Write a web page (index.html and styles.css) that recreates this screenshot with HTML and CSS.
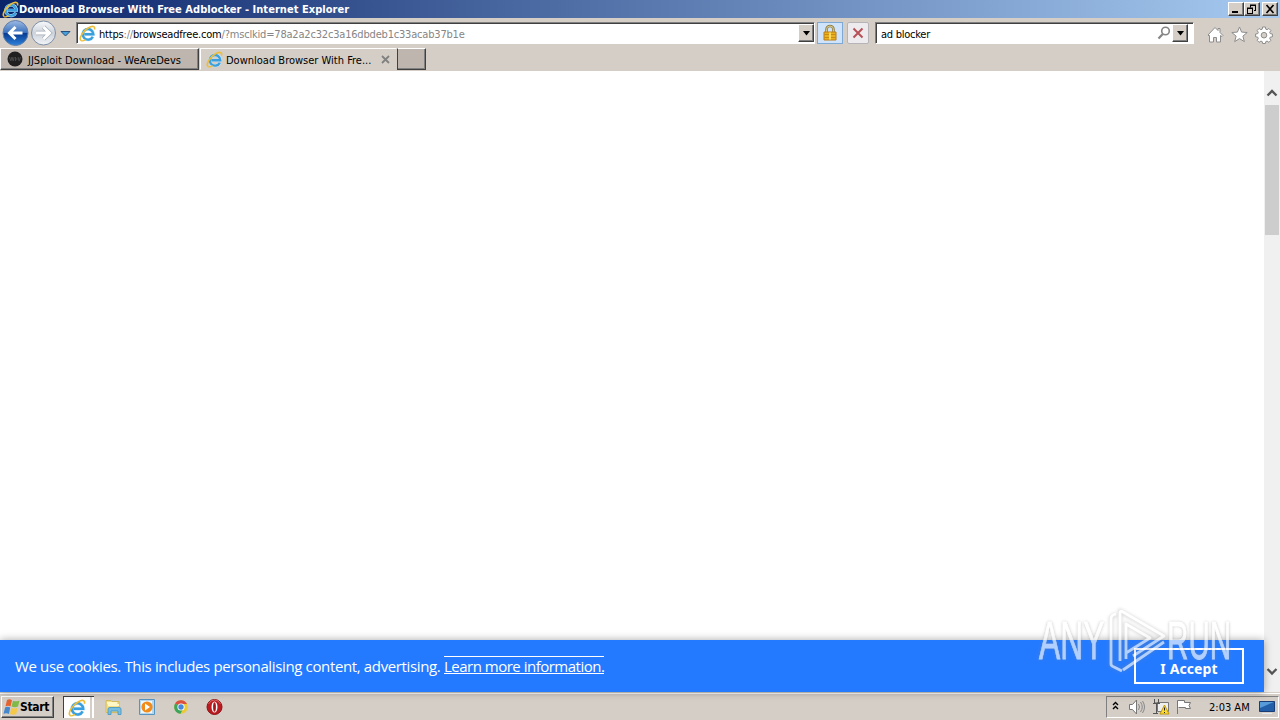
FILE: index.html
```
<!doctype html>
<html lang="en">
<head>
  <meta charset="UTF-8">
  <meta name="viewport" content="width=device-width, initial-scale=1">
  <title>Download Browser With Free Adblocker</title>
  <link rel="stylesheet" href="styles.css">
</head>
<body>
<svg class="defs" width="0" height="0">
  <defs>
    <linearGradient id="blueOrb" x1="0" y1="0" x2="0" y2="1">
      <stop offset="0" stop-color="#9dbbe4"/>
      <stop offset=".48" stop-color="#3c72bd"/>
      <stop offset=".5" stop-color="#08388f"/>
      <stop offset="1" stop-color="#2b83dc"/>
    </linearGradient>
    <linearGradient id="greyOrb" x1="0" y1="0" x2="0" y2="1">
      <stop offset="0" stop-color="#f8fafc"/>
      <stop offset=".5" stop-color="#cdd3db"/>
      <stop offset="1" stop-color="#f2f5f8"/>
    </linearGradient>
    <symbol id="ie" viewBox="0 0 16 16">
      <path d="M13 11A5 5 0 1 1 13.500 8.700H5" fill="none" stroke="#c5e8fb" stroke-width="3"/>
      <path d="M13 11A5 5 0 1 1 13.500 8.700H5" fill="none" stroke="#3a9fdc" stroke-width="2.200"/>
      <path d="M1.900 14.600C-.4 12.600 3.600 5.600 9 2.600c3.400-2 6.600-1.900 5.500 1.700" fill="none" stroke="#eebd37" stroke-width="1.500"/>
      <path d="M1.900 14.600c1 .8 2.800.1 4.300-.9" fill="none" stroke="#eebd37" stroke-width="1.300"/>
    </symbol>
  </defs>
</svg>

<header class="titlebar">
  <svg class="ie-icon" width="17" height="17"><use href="#ie"/></svg>
  <span class="title">Download Browser With Free Adblocker - Internet Explorer</span>
  <div class="window-buttons">
    <button class="win-btn"><svg width="12" height="10"><path d="M2 7h6v2H2z"/></svg></button>
    <button class="win-btn"><svg width="12" height="10"><path d="M4 1h6M4.500 1v2.500M9.500 1v5.500M10 6.500H8M1 4h6M1.500 4v5.500M6.500 4v5.500M1 9.500h6M4 1.500h6M1 4.500h6" fill="none" stroke="#000"/></svg></button>
    <button class="win-btn close"><svg width="12" height="10"><path d="M2.500 1l7 8M9.500 1l-7 8" stroke="#000" stroke-width="1.700"/></svg></button>
  </div>
</header>

<nav class="navbar">
  <svg class="orbs" width="74" height="28">
    <circle cx="15.500" cy="15" r="12.500" fill="url(#blueOrb)" stroke="#637da7"/>
    <path d="M15.500 9l-6 6 6 6M10 15h12.500" fill="none" stroke="#fff" stroke-width="3"/>
    <circle cx="43.500" cy="15" r="12" fill="url(#greyOrb)" stroke="#7e8fa6"/>
    <path d="M43.500 9l6 6-6 6M49 15H36" fill="none" stroke="#a4adb7" stroke-width="4.400"/>
    <path d="M43.500 9l6 6-6 6M49 15H36" fill="none" stroke="#fff" stroke-width="3"/>
    <path d="M61 13.500h9L65.500 18z" fill="#479fd9" stroke="#24507f"/>
  </svg>
  <div class="field address">
    <svg class="ie-icon" width="17" height="17"><use href="#ie"/></svg>
    <span class="url">https<i>://</i>browseadfree.com<i>/?msclkid=78a2a2c32c3a16dbdeb1c33acab37b1e</i></span>
    <span class="drop"><svg width="9" height="5"><path d="M1 0h7L4.500 4.500z"/></svg></span>
  </div>
  <button class="tool lock">
    <svg width="16" height="18">
      <path d="M4.500 9V5.500a3.500 3.500 0 0 1 7 0V9" fill="none" stroke="#8f7e43" stroke-width="2.600"/>
      <path d="M4.500 9V5.500a3.500 3.500 0 0 1 7 0V9" fill="none" stroke="#d8cc91"/>
      <path d="M2 8h12v8H2z" fill="#e8b11d" stroke="#bc7c16"/>
      <path d="M2 10.500h12M2 13.500h12" stroke="#c98b13"/>
      <path d="M8 8.500v7" stroke="#f9db64" stroke-width="2"/>
    </svg>
  </button>
  <button class="tool stop">
    <svg width="14" height="14"><path d="M2.500 2.500l9 9M11.500 2.500l-9 9" stroke="#b85058" stroke-width="2"/></svg>
  </button>
  <div class="field search">
    <span class="query">ad blocker</span>
    <svg class="lens" width="14" height="14"><circle cx="8.500" cy="5" r="3.800" fill="none" stroke="#858585" stroke-width="1.600"/><path d="M5.800 8L1.500 12.500" stroke="#858585" stroke-width="2.200"/></svg>
    <span class="drop"><svg width="9" height="5"><path d="M1 0h7L4.500 4.500z"/></svg></span>
  </div>
  <svg class="commands" width="70" height="20">
    <g fill="#fff" stroke="#8d8d8d">
      <path d="M2 10l7-7.500 3 3V3.500h2V7.500l3 3-1 1-1.500-1V17h-4v-4.500h-3V17h-4v-6.500L3 11z"/>
      <path d="M33.500 2l2.100 5.100 5.600.4-4.300 3.600 1.400 5.500-4.800-3-4.800 3 1.400-5.500-4.300-3.600 5.600-.4z"/>
      <path d="M56.600 2h2.800l.4 2.200 1.300.5 1.800-1.200 2 2-1.200 1.800.5 1.300 2.200.4v2.800l-2.200.4-.5 1.300 1.200 1.800-2 2-1.800-1.200-1.300.5-.4 1.900h-2.800l-.4-1.900-1.300-.5-1.800 1.200-2-2 1.200-1.800-.5-1.300-2.200-.4V9l2.200-.4.5-1.300-1.200-1.800 2-2 1.800 1.200 1.300-.5z"/>
      <circle cx="58" cy="10.200" r="2.800" fill="#d5cec6"/>
    </g>
  </svg>
</nav>

<div class="tabs">
  <div class="tab">
    <svg width="16" height="16"><circle cx="8" cy="8" r="7.500" fill="#202020"/><path d="M2.500 6l1.300 4 1.200-4 1.200 4 1-4M8.500 6v4M8.500 8h2M11 6l1.200 4 1.300-4" fill="none" stroke="#484848"/></svg>
    <span class="label-first">JJSploit Download - WeAreDevs</span>
  </div>
  <div class="tab active">
    <svg width="17" height="17"><use href="#ie"/></svg>
    <span class="label-active">Download Browser With Fre...</span>
    <svg class="tab-close" width="9" height="9"><path d="M1 1l7 7M8 1L1 8" stroke="#818181" stroke-width="1.800"/></svg>
  </div>
  <div class="tab new-tab"></div>
</div>

<main class="viewport">
  <div class="page">
    <div class="cookie-bar">
      <p class="cookie-text">We use cookies. This includes personalising content, advertising. <a class="more">Learn more information.</a></p>
      <button class="accept">I Accept</button>
    </div>
    <div class="watermark">
      <span class="mark-any">ANY</span>
      <svg class="mark-logo" width="60" height="68" fill="none" stroke-linejoin="round">
        <path class="mark-shade" d="M10 4L5 8v47l9 5M14 51V1l44 25-31 20M58 32L16 60M20 49V14l24 14-24 15"/>
        <path d="M10 4Q5 5 5 9v45q0 2 3 3l8 4M14 51V3q0-3 3-1l41 24-31 20M58 32L17 60M20 49V14l24 14-24 15" stroke="#fff" stroke-width="2.800"/>
      </svg>
      <span class="mark-run">RUN</span>
    </div>
  </div>
  <div class="scrollbar">
    <svg width="16" height="12"><path d="M3.500 8.500L8 4l4.500 4.500" fill="none" stroke="#555" stroke-width="2.300"/></svg>
    <div class="thumb"></div>
    <svg class="down" width="16" height="12"><path d="M3.500 4L8 8.500 12.500 4" fill="none" stroke="#555" stroke-width="2.300"/></svg>
  </div>
</main>

<footer class="taskbar">
  <button class="start">
    <svg width="17" height="17">
      <path d="M4 1c2-1 3.500-.8 5 .3L7.500 7.500C6 6.500 4.500 6.500 2.500 7.200z" fill="#e46431"/>
      <path d="M10 1.700c2 .9 4 .9 6.500-.2L15 7.500c-2 1-4.500.9-6.500 0z" fill="#80b948"/>
      <path d="M2.200 8.200C4 7.500 5.500 7.500 7.200 8.500L6 15c-1.800-1-3.500-1-5.500-.3z" fill="#4688cc"/>
      <path d="M8.200 8.700c2 .9 4.100.9 6.500 0L13.200 15c-2 1-4.500.8-6.200-.1z" fill="#f6c847"/>
    </svg>
    <span>Start</span>
  </button>
  <div class="quick">
    <div class="task-ie"><svg width="18" height="18"><use href="#ie"/></svg></div>
    <svg width="18" height="18">
      <path d="M2 2.500h5l1 1h7v11H2z" fill="#f4df85" stroke="#d4ba60"/>
      <path d="M3 5h10M4 7h11" stroke="#fff7c5" stroke-width="2"/>
      <path d="M4 16.500V11q0-1.500 2-1.500h9q2 0 2 1.500v5.500h-3V13H7v3.500z" fill="#77bddf" stroke="#559ec3"/>
    </svg>
    <svg width="18" height="18"><path d="M1.500 1.500h15v15h-15z" fill="#b6d8ef" stroke="#5994c1"/><path d="M3 3h11v12H3z" fill="#eef8fc"/><circle cx="9" cy="9" r="5.600" fill="#f18b1b"/><path d="M7 5.500l5 3.500-5 3.500z" fill="#fff"/></svg>
    <svg width="18" height="18"><circle cx="9" cy="9" r="6.800" fill="#eacb35"/><path d="M9 9L3.100 5.600A6.800 6.800 0 0 1 15 6H9z" fill="#dc5042"/><path d="M3.100 5.600A6.800 6.800 0 0 0 8.500 15.800L11.500 10 9 9z" fill="#3da45b"/><circle cx="9" cy="9" r="3.600" fill="#fff"/><circle cx="9" cy="9" r="2.700" fill="#4888dc"/></svg>
    <svg width="18" height="18"><circle cx="8.500" cy="9" r="7.500" fill="#b91b20" stroke="#8f1114"/><path d="M2.500 6q2-4 6-4t6 4" fill="none" stroke="#dc6260"/><ellipse cx="8.500" cy="9" rx="3" ry="5.500" fill="#fff"/><ellipse cx="8.500" cy="9" rx="1.400" ry="4.700" fill="#a51519"/></svg>
  </div>
  <div class="tray">
    <svg width="80" height="20">
      <path d="M2 8l2.500-2.500L7 8M2 12l2.500-2.500L7 12" fill="none" stroke="#000" stroke-width="1.400"/>
      <path d="M18.500 7.500h3l4-4.500v14l-4-4.500h-3z" fill="#fff" stroke="#777"/>
      <path d="M27.500 7q2 3 0 6M29.500 5q3.500 5 0 10M31.500 4q4 6 0 12" fill="none" stroke="#888"/>
      <path d="M46.500 5.500h11v9h-11z" fill="#eee" stroke="#777"/>
      <path d="M43.500 2v4h4V2M42 6.500h7M45.500 7v9M42 16.500h5" fill="none" stroke="#555"/>
      <path d="M53.500 8L58 17H49z" fill="#ffdc34" stroke="#bd960c"/><path d="M53.500 10.500v3M53.500 15v1" stroke="#222"/>
      <path d="M66.500 17V3.500h7v2h6q-3 3 0 6h-5v-1h-7" fill="#fff" stroke="#777"/>
    </svg>
    <span class="clock">2:03 AM</span>
    <svg class="desktop" width="16" height="16"><path d="M.5 2.500h15v10H.5z" fill="#235fa8" stroke="#1b3d75"/><path d="M1 3h14L1 9z" fill="#579bd8"/><path d="M3 14.500h10" stroke="#e2e9ef"/></svg>
  </div>
</footer>
</body>
</html>
```
FILE: styles.css
```
* {
  box-sizing: border-box;
}
body {
  margin: 0;
  height: 720px;
  display: flex;
  flex-direction: column;
  overflow: hidden;
  background: #d5cec7;
  font: 11px "DejaVu Sans Condensed", "DejaVu Sans", sans-serif;
  font-stretch: condensed;
  color: #000;
  white-space: nowrap;
}
button {
  font: inherit;
  padding: 0;
}
svg {
  display: block;
  flex: none;
}
.defs {
  position: absolute;
}
.titlebar {
  height: 18px;
  flex: none;
  display: flex;
  align-items: center;
  padding-left: 2px;
  background: linear-gradient(to right, #0a246a, #a6caf0);
}
.title {
  width: 331px;
  color: #fff;
  font-weight: bold;
  letter-spacing: 0.04px;
}
.window-buttons {
  display: flex;
  margin-left: auto;
  padding-right: 2px;
}
.win-btn {
  width: 16px;
  height: 14px;
  display: flex;
  align-items: center;
  justify-content: center;
  background: #d5cec7;
  border: 1px solid;
  border-color: #fff #404040 #404040 #fff;
  box-shadow: inset -1px -1px #808080;
}
.close {
  margin-left: 2px;
}
.navbar {
  height: 30px;
  flex: none;
  display: flex;
  align-items: flex-start;
}
.field {
  height: 22px;
  margin-top: 4px;
  display: flex;
  align-items: center;
  background: #fff;
  border: 1px solid;
  border-color: #808080 #fff #fff #808080;
  box-shadow: inset 1px 1px #404040;
}
.address {
  width: 739px;
  margin-left: 2px;
  padding-left: 2px;
  flex: none;
}
.url {
  margin-left: 3px;
  padding-top: 2px;
  letter-spacing: -0.19px;
}
.url i {
  font-style: normal;
  color: #858585;
}
.drop {
  width: 16px;
  height: 18px;
  display: flex;
  align-items: center;
  justify-content: center;
  margin-left: auto;
  background: #d5cec7;
  border: 1px solid;
  border-color: #fff #404040 #404040 #fff;
  box-shadow: inset -1px -1px #808080;
}
.tool {
  height: 22px;
  margin-top: 4px;
  flex: none;
  display: flex;
  align-items: center;
  justify-content: center;
  border: 1px solid #7fa9d5;
  background: #cfe3fa;
}
.lock {
  width: 26px;
  margin-left: 2px;
}
.stop {
  width: 22px;
  margin-left: 4px;
  border-color: #b6b4b7;
  border-radius: 2px;
  background: #edebed;
}
.search {
  width: 319px;
  flex: none;
  margin-left: 6px;
  padding: 0 5px;
}
.query {
  padding-top: 2px;
  letter-spacing: -0.25px;
}
.lens {
  margin-left: auto;
}
.search .drop {
  margin-left: 1px;
}
.commands {
  margin: 7px 0 0 12px;
}
.tabs {
  height: 22px;
  flex: none;
  display: flex;
}
.tab {
  width: 199px;
  display: flex;
  align-items: center;
  padding-left: 6px;
  background: #bdb5ae;
  border: 1px solid;
  border-color: #fff #404040 #404040 #fff;
  box-shadow: inset -1px -1px #808080;
}
.tab span {
  margin-left: 5px;
  padding-top: 2px;
}
.label-first {
  letter-spacing: 0.01px;
}
.active {
  width: 197px;
  margin-left: 1px;
  padding-left: 5px;
  background: #d5cec7;
  border-color: #fff transparent transparent #fff;
  box-shadow: none;
}
.active .label-active {
  width: 155px;
  margin-left: 3px;
}
.tab-close {
  margin-top: 1px;
}
.new-tab {
  width: 29px;
  border-left-color: #404040;
}
.viewport {
  flex: 1;
  min-height: 0;
  display: flex;
  border-top: 1px solid #d5cec7;
}
.page {
  width: 1264px;
  display: flex;
  flex-direction: column;
  justify-content: flex-end;
  position: relative;
  background: #fff;
}
.cookie-bar {
  height: 52px;
  display: flex;
  align-items: center;
  padding: 0 20px 0 15px;
  background: #247aff;
  box-shadow: 0 0 8px rgba(0, 0, 0, 0.35);
  color: #fff;
  font: 15px "Open Sans", "Noto Sans", sans-serif;
}
.cookie-text {
  margin: 0;
  letter-spacing: -0.36px;
}
.more {
  display: inline-block;
  width: 160px;
  height: 18px;
  line-height: 19px;
  letter-spacing: -0.5px;
  border-top: 1px solid #fff;
  border-bottom: 1px solid #fff;
}
.accept {
  width: 110px;
  height: 36px;
  margin-left: auto;
  padding-top: 5px;
  border: 2px solid #fff;
  background: none;
  color: #fff;
  font: bold 14px "Noto Sans", sans-serif;
  letter-spacing: 0.1px;
}
/* floats over the page and the cookie bar */
.watermark {
  position: absolute;
  right: 32px;
  bottom: 14px;
  width: 193px;
  height: 68px;
  display: flex;
  align-items: center;
  justify-content: space-between;
  opacity: 0.65;
  color: #fff;
  font: 53px/38px "Liberation Sans", sans-serif;
  -webkit-text-stroke: 0.8px #fff;
  text-shadow: 0 0 4px #888;
}
.mark-any,
.mark-run {
  width: 65px;
  margin-bottom: 6px;
  transform: scaleX(0.6);
  transform-origin: left;
}
.mark-run {
  transform: scaleX(0.56);
}
.mark-logo {
  width: 60px;
  overflow: visible;
}
.mark-shade {
  stroke: #888;
  stroke-width: 5px;
  stroke-opacity: 0.4;
  filter: blur(1.5px);
}
.scrollbar {
  width: 16px;
  display: flex;
  flex-direction: column;
  align-items: center;
  padding-top: 16px;
  background: #f0f0f0;
}
.thumb {
  width: 14px;
  height: 130px;
  margin-top: 6px;
  background: #cdcdcd;
}
.down {
  margin-top: auto;
  margin-bottom: 15px;
}
.taskbar {
  height: 28px;
  flex: none;
  display: flex;
  padding-top: 3px;
  border-top: 1px solid #d5cec7;
  box-shadow: inset 0 1px #fff;
}
.start {
  width: 53px;
  height: 22px;
  margin-left: 1px;
  display: flex;
  align-items: center;
  background: #d5cec7;
  border: 1px solid;
  border-color: #fff #404040 #404040 #fff;
  box-shadow: inset -1px -1px #808080;
  font-weight: bold;
  font-size: 12px;
  letter-spacing: -0.35px;
}
.start svg {
  margin-left: 1px;
}
.quick {
  display: flex;
  gap: 16px;
  height: 22px;
  align-items: center;
  margin-left: 9px;
}
.task-ie {
  width: 31px;
  height: 22px;
  display: flex;
  align-items: center;
  padding-left: 4px;
  margin-right: -6px;
  background: linear-gradient(to right, #fff 26px, #d5cec7 26px, #d5cec7 28px, #fff 28px);
  border-top: 1px solid #404040;
  border-left: 1px solid #404040;
}
.tray {
  width: 173px;
  height: 22px;
  margin-left: auto;
  margin-right: 1px;
  display: flex;
  align-items: center;
  padding-left: 4px;
  border: 1px solid;
  border-color: #808080 #fff #fff #808080;
}
.clock {
  width: 42px;
  margin-left: 18px;
}
.desktop {
  margin-left: 8px;
}
```
